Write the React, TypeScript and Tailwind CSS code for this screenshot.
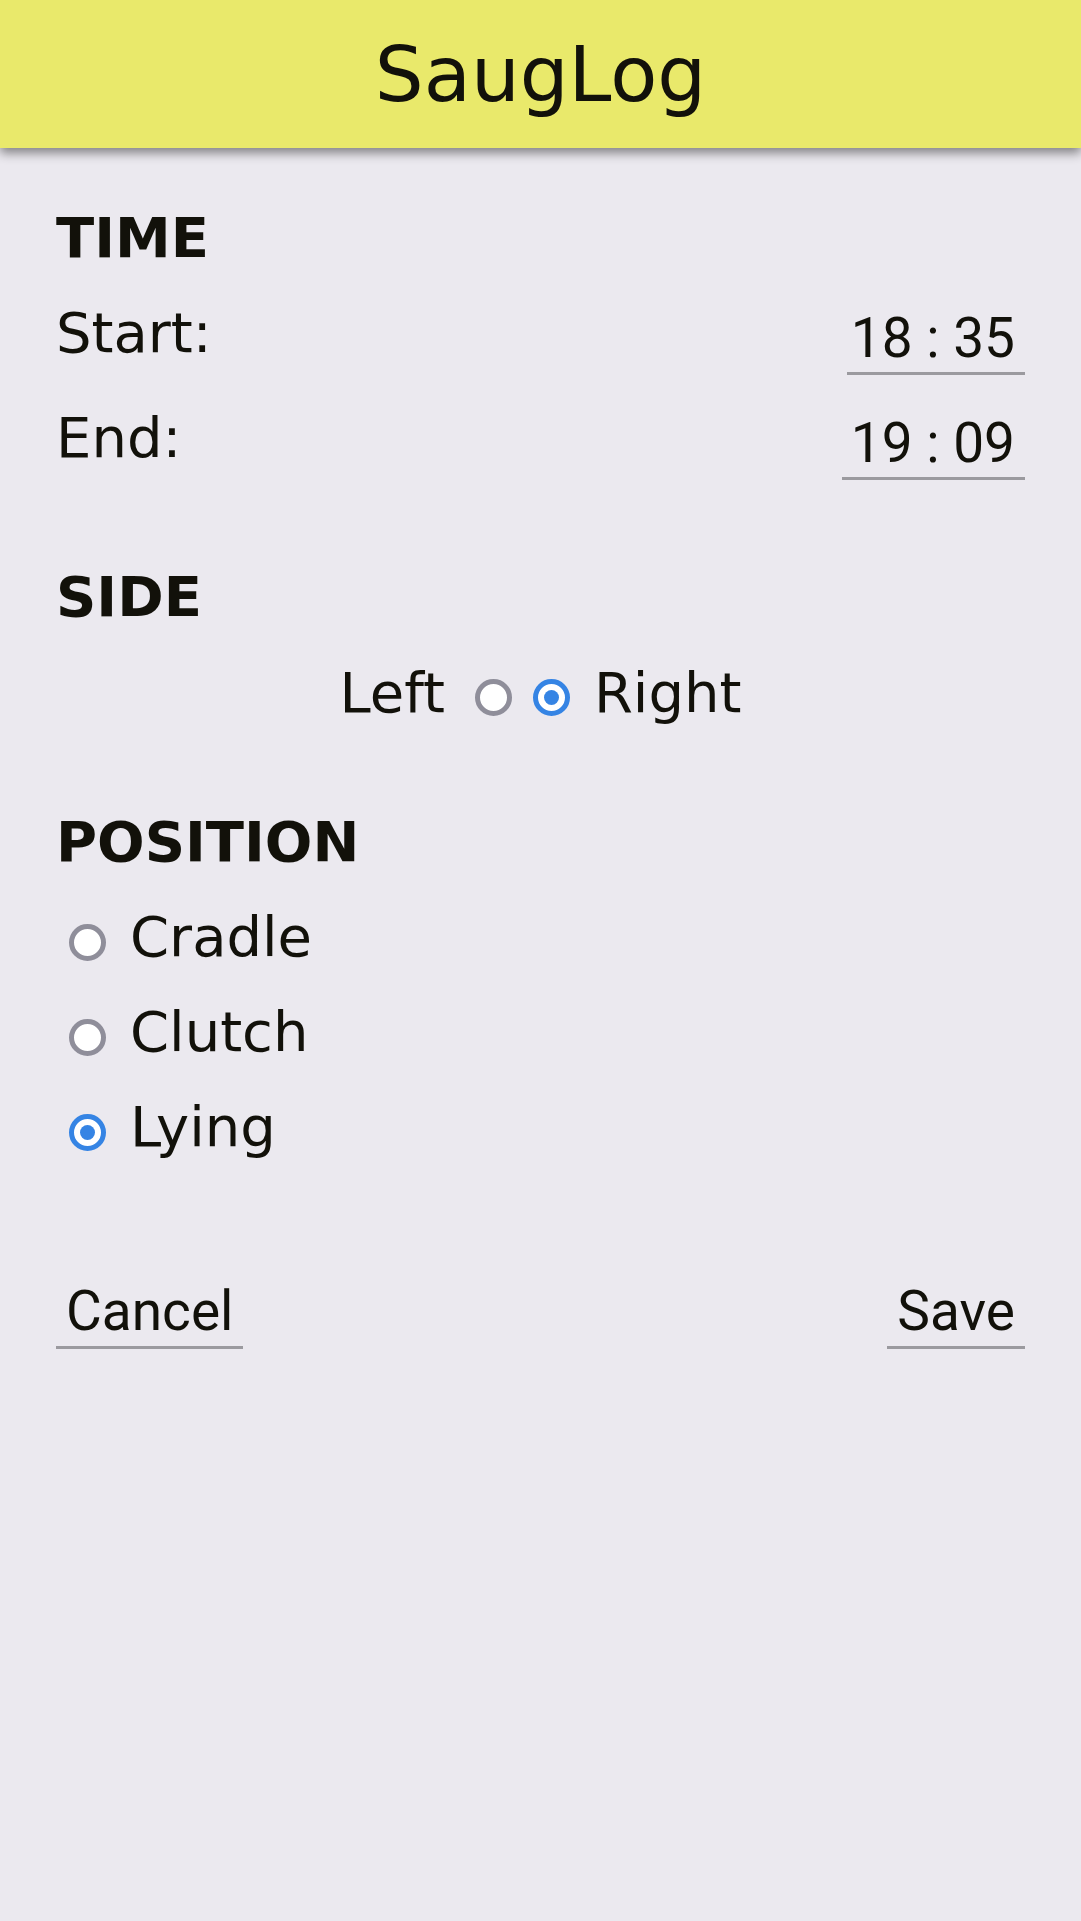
import React from 'react';

function Radio({ checked }: { checked?: boolean }) {
  if (checked) {
    return (
      <span className="flex items-center justify-center w-[37px] h-[37px] shrink-0 rounded-full border-[5px] border-[#3584e4] bg-white">
        <span className="block w-[15px] h-[15px] rounded-full bg-[#3584e4]" />
      </span>
    );
  }
  return <span className="block w-[37px] h-[37px] shrink-0 rounded-full border-[5px] border-[#8f8e9a] bg-white" />;
}

function TimeField({ value, width }: { value: string; width: string }) {
  return (
    <span
      className={`mt-[10px] ${width} pr-[10px] pb-[6px] text-right border-b-[3px] border-[#9b9a9f] font-['Roboto',sans-serif] text-[55px] leading-none`}
    >
      {value}
    </span>
  );
}

export default function App() {
  return (
    <div className="min-h-screen bg-[#ebe9ef] text-[#12110a] font-['DejaVu_Sans',sans-serif]">
      {/* Header */}
      <header className="relative z-10 h-[148px] flex items-center justify-center bg-[#e9e96b] shadow-[0_5px_10px_rgba(0,0,0,0.45)]">
        <h1 className="text-[77px] leading-none font-normal">SaugLog</h1>
      </header>

      <main className="px-14 pt-[58px]">
        <div className="flex flex-col gap-[85px]">

          {/* Time */}
          <section className="flex flex-col gap-[31px]">
            <h2 className="text-[56px] leading-[64px] font-bold">TIME</h2>
            <div className="flex justify-between items-start">
              <span className="text-[56px] leading-[64px]">Start:</span>
              <TimeField value="18 : 35" width="w-[178px]" />
            </div>
            <div className="flex justify-between items-start">
              <span className="text-[56px] leading-[64px]">End:</span>
              <TimeField value="19 : 09" width="w-[183px]" />
            </div>
          </section>

          {/* Side */}
          <section className="flex flex-col gap-[32px]">
            <h2 className="text-[56px] leading-[64px] font-bold">SIDE</h2>
            <div className="flex justify-center items-start text-[56px] leading-[64px]">
              <span className="mr-[30px]">Left</span>
              <span className="mt-[18px]"><Radio /></span>
              <span className="mt-[18px] ml-[21px]"><Radio checked /></span>
              <span className="ml-[24px]">Right</span>
            </div>
          </section>

          {/* Position */}
          <section className="flex flex-col gap-[31px]">
            <h2 className="text-[56px] leading-[64px] font-bold">POSITION</h2>
            {[
              { label: 'Cradle', checked: false },
              { label: 'Clutch', checked: false },
              { label: 'Lying', checked: true },
            ].map((p) => (
              <div key={p.label} className="flex items-start text-[56px] leading-[64px]">
                <span className="mt-[19px] ml-[13px] mr-[24px]"><Radio checked={p.checked} /></span>
                <span>{p.label}</span>
              </div>
            ))}
          </section>
        </div>

        {/* Actions */}
        <div className="mt-[125px] flex justify-between items-start font-['Roboto',sans-serif] text-[55px] leading-none">
          <button className="px-[10px] pb-[7px] border-b-[3px] border-[#9b9a9f]">Cancel</button>
          <button className="px-[10px] pb-[7px] border-b-[3px] border-[#9b9a9f]">Save</button>
        </div>
      </main>
    </div>
  );
}
